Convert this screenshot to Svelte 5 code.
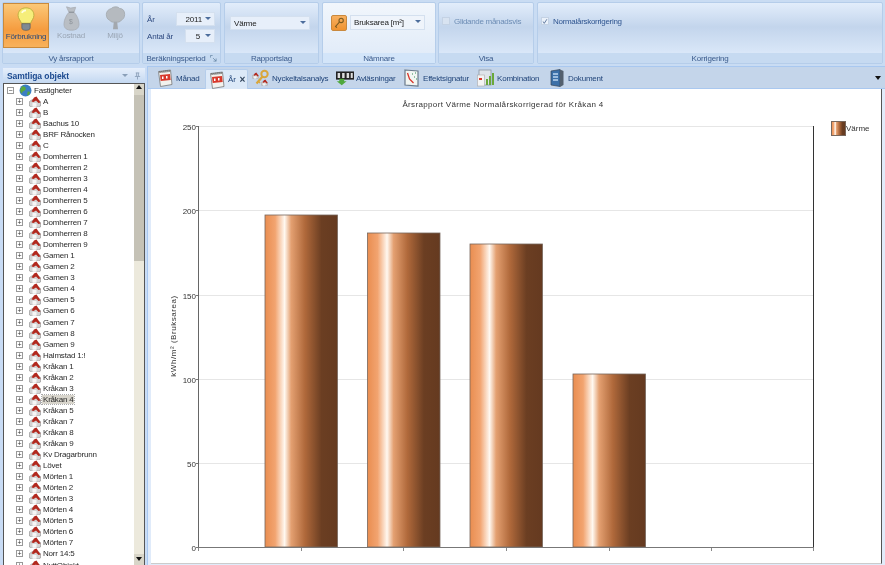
<script>
	const tabs = [
		{ label: 'Månad', icon: 'cal', w: 51 },
		{ label: 'År', icon: 'cal', active: true, w: 43 },
		{ label: 'Nyckeltalsanalys', icon: 'keys', w: 84 },
		{ label: 'Avläsningar', icon: 'counter', w: 67 },
		{ label: 'Effektsignatur', icon: 'sig', w: 74 },
		{ label: 'Kombination', icon: 'combo', w: 71 },
		{ label: 'Dokument', icon: 'doc', w: 60 }
	];

	const seq = (name, nums) => nums.map((n) => `${name} ${n}`);
	const objects = [
		'A',
		'B',
		'Bachus 10',
		'BRF Rånocken',
		'C',
		...seq('Domherren', [1, 2, 3, 4, 5, 6, 7, 8, 9]),
		...seq('Gamen', [1, 2, 3, 4, 5, 6, 7, 8, 9]),
		'Halmstad 1:!',
		...seq('Kråkan', [1, 2, 3, 4, 5, 7, 8, 9]),
		'Kv Dragarbrunn',
		'Lövet',
		...seq('Mörten', [1, 2, 3, 4, 5, 6, 7]),
		'Norr 14:5',
		'NuttObjekt'
	];

	const ticks = [
		{ label: '250', y: 126.5 },
		{ label: '200', y: 210.5 },
		{ label: '150', y: 295.5 },
		{ label: '100', y: 379.5 },
		{ label: '50', y: 463.5 },
		{ label: '0', y: 547.5 }
	];
	const bars = [
		{ x: 265, top: 215 },
		{ x: 367.5, top: 233 },
		{ x: 470, top: 244 },
		{ x: 573, top: 374 }
	];
	const xTicks = [198, 301, 403, 506, 609, 711, 813];
</script>

<svg class="defs" width="0" height="0" aria-hidden="true">
	<defs>
		<linearGradient id="copper" x1="0" x2="1" y1="0" y2="0">
			<stop offset="0" stop-color="#e98d50" />
			<stop offset="0.14" stop-color="#f2a470" />
			<stop offset="0.27" stop-color="#fff8f0" />
			<stop offset="0.36" stop-color="#e4a071" />
			<stop offset="0.55" stop-color="#b0693b" />
			<stop offset="0.78" stop-color="#6b3e22" />
			<stop offset="1" stop-color="#653a20" />
		</linearGradient>
		<symbol id="cal" viewBox="0 0 17 18">
			<path d="M2 2.500l12-1.500 1.500 14.500-11.500 2z" fill="#f2f2ee" stroke="#777" stroke-width=".8" />
			<path d="M3.500 6l10-1 .7 6-10 1z" fill="#d8392c" />
			<path d="M5.500 7.500h1.500v2.500h-1.500zM9.500 7h1.500v2.500h-1.500z" fill="#fff" />
			<path d="M3 3.200l10.500-1.200" stroke="#444" stroke-width="1.800" stroke-dasharray="1 1" />
		</symbol>
		<symbol id="house" viewBox="0 0 12 11">
			<path d="M.5 5.500l3-2h5l3 2v4.500l-2 .8h-7l-2-.8z" fill="#d4d4d4" stroke="#8c8c8c" stroke-width=".6" />
			<path d="M3.500 7h4v3.800h-4z" fill="#f6f6f6" />
			<path d="M2.500 5.500l2.500-4 2.500-1 4 6-2 .5-2.500-2.500-2.500 1.500z" fill="#b3281e" />
		</symbol>
		<symbol id="keys" viewBox="0 0 18 18">
			<circle cx="12.500" cy="5" r="3.200" fill="none" stroke="#d9a63a" stroke-width="2" />
			<path d="M10.500 7.500l-6 7" stroke="#d9a63a" stroke-width="2.200" />
			<path d="M6 12l2 2" stroke="#d9a63a" stroke-width="1.500" />
			<use href="#house" x="0" y="3" width="7" height="7" />
			<use href="#house" x="9" y="10" width="7" height="7" />
		</symbol>
		<symbol id="counter" viewBox="0 0 22 18">
			<rect x="0" y="1" width="22" height="10" fill="#222" />
			<path d="M2 3h3v6h-3zM7.500 3h3v6h-3zM13 3h3v6h-3zM18 3h2.500v6h-2.500z" fill="#ddd" />
			<path d="M4 10h6v3h3l-6 5-6-5h3z" fill="#4fa83d" />
		</symbol>
		<symbol id="sig" viewBox="0 0 16 18">
			<path d="M1 1l13 1v15l-13-1z" fill="#f2f6f2" stroke="#6a7a8a" stroke-width="1.200" />
			<path d="M3.500 4l2 6 4 4" fill="none" stroke="#d8342a" stroke-width="1.300" />
			<path d="M8 5h1M11 4h1M10 8h1M12 10h1" stroke="#2e8b57" stroke-width="1" />
		</symbol>
		<symbol id="combo" viewBox="0 0 18 18">
			<rect x="2" y="1" width="12" height="15" fill="#dfe4ea" stroke="#8a97a6" stroke-width=".8" />
			<rect x="0.500" y="6" width="7" height="11" fill="#f4f4f4" stroke="#aaa" stroke-width=".6" />
			<path d="M2 9h3v2h-3z" fill="#d8392c" />
			<path d="M9 16v-6h2v6zM12 16v-9h2v9zM15 16v-12h2v12z" fill="#6aa83c" />
		</symbol>
		<symbol id="doc" viewBox="0 0 14 18">
			<path d="M1 2l9-1.500v17l-9-1.500z" fill="#3a6fa8" stroke="#33465a" stroke-width=".7" />
			<path d="M10 .5l3.500 1.500v14l-3.500 2z" fill="#53606e" />
			<path d="M3 5h5M3 8h5M3 11h5" stroke="#bcd6f0" stroke-width="1.300" />
		</symbol>
	</defs>
</svg>

<div class="app">
	<header class="ribbon">
		<section class="group g1">
			<div class="body big-row">
				<div class="big active">
					<svg viewBox="0 0 24 30" width="20" height="25">
						<path d="M12 1c6 0 9.500 4 9.500 9 0 4-3 6-4 9.500h-11c-1-3.500-4-5.500-4-9.500 0-5 3.500-9 9.500-9z" fill="#f6ee7a" stroke="#b5a93a" />
						<path d="M7 7c1-2 3-3 5-3" stroke="#fffde0" stroke-width="2" fill="none" />
						<path d="M7 20h10v5c0 2-2 3-5 3s-5-1-5-3z" fill="#7f8a93" stroke="#4f5a64" stroke-width=".8" />
					</svg>
					<span>Förbrukning</span>
				</div>
				<div class="big off">
					<svg viewBox="0 0 20 30" width="17" height="25">
						<path d="M4 1l5 1.500 6-1-2 6c3 3 6 9 6 14 0 5-3 7.500-9 7.500s-9-2.500-9-7.500c0-5 3-11 6-14z" fill="#b9bec4" stroke="#a9afb6" />
						<path d="M7 7.500h6" stroke="#8d939a" stroke-width="1.500" />
						<text x="7" y="21" class="dollar">$</text>
					</svg>
					<span>Kostnad</span>
				</div>
				<div class="big off">
					<svg viewBox="0 0 24 30" width="21" height="25">
						<path d="M10 19h4l1 9h-6z" fill="#a3a8ae" />
						<path d="M12 1c3 0 4 1 5 2 4 0 6 3 6 7s-2 6-4 7c-1 2-4 3-7 2-3 1-6 0-7-2-3-1-4-4-4-7s2-6 6-7c1-1 3-2 5-2z" fill="#b5babf" stroke="#a4a9af" />
					</svg>
					<span>Miljö</span>
				</div>
			</div>
			<footer>Vy årsrapport</footer>
		</section>

		<section class="group g2">
			<div class="body period">
				<div class="field">
					<label for="year">År</label>
					<div class="combo num wide" id="year">2011<i></i></div>
				</div>
				<div class="field">
					<label for="count">Antal år</label>
					<div class="combo num" id="count">5<i></i></div>
				</div>
			</div>
			<footer>
				Beräkningsperiod
				<svg class="launcher" viewBox="0 0 8 8" width="7" height="7">
					<path d="M.5 3V.5H3M3.500 3.500L7 7M4 7h3V4" fill="none" stroke="#5f7f9f" stroke-width=".8" />
				</svg>
			</footer>
		</section>

		<section class="group g3">
			<div class="body">
				<div class="combo report">Värme<i></i></div>
			</div>
			<footer>Rapportslag</footer>
		</section>

		<section class="group g4">
			<div class="body denom">
				<span class="keybtn">
					<svg viewBox="0 0 14 14" width="12" height="12">
						<circle cx="9.500" cy="4" r="2.500" fill="none" stroke="#7a5a20" stroke-width="1.300" />
						<path d="M7.500 6L3 11l1.500 1.500" fill="none" stroke="#7a5a20" stroke-width="1.300" />
					</svg>
				</span>
				<div class="combo area">Bruksarea [m²]<i></i></div>
			</div>
			<footer>Nämnare</footer>
		</section>

		<section class="group g5">
			<div class="body check-row muted">
				<span class="box"></span>
				Glidande månadsvis
			</div>
			<footer>Visa</footer>
		</section>

		<section class="group g6">
			<div class="body check-row">
				<span class="box checked">
					<svg viewBox="0 0 8 8" width="7" height="7">
						<path d="M1.500 4l1.500 2.500 3.500-5.500" fill="none" stroke="#3c5a85" stroke-width="1" />
					</svg>
				</span>
				Normalårskorrigering
			</div>
			<footer>Korrigering</footer>
		</section>
	</header>

	<div class="main">
		<aside class="side">
			<div class="side-head">
				<strong>Samtliga objekt</strong>
				<span class="caret"></span>
				<svg viewBox="0 0 8 9" width="7" height="8">
					<path d="M2 1h4M3 1v4M5 1v4M1 5h6M4 5v3.500" fill="none" stroke="#8a9fb8" />
				</svg>
			</div>
			<div class="tree-box">
				<div class="tree">
					<div class="row root">
						<span class="exp">−</span>
						<svg class="globe" viewBox="0 0 12 12" width="13" height="13">
							<circle cx="6" cy="6" r="5.500" fill="#3b7fc4" />
							<path d="M3 2c2 0 4 1 3 3s-3 1-3 3-2-1-2-2 1-3 2-4zM8 7c1.500 0 2.500 0 2 1.500s-2 2.500-2.500 1.500z" fill="#5aa83c" />
						</svg>
						<span class="name">Fastigheter</span>
					</div>
					{#each objects as name}
						<div class="row">
							<span class="exp">+</span>
							<svg class="house" width="12" height="11"><use href="#house" width="12" height="11" /></svg>
							<span class="name" class:picked={name === 'Kråkan 4'}>{name}</span>
						</div>
					{/each}
				</div>
				<div class="scroll">
					<span class="arrow up"></span>
					<span class="thumb"></span>
					<span class="arrow down"></span>
				</div>
			</div>
		</aside>

		<div class="content">
			<nav class="tabs">
				{#each tabs as tab}
					<div class="tab" class:current={tab.active} style="width: {tab.w}px">
						<svg width="18" height="18"><use href="#{tab.icon}" width="18" height="18" /></svg>
						<span>{tab.label}</span>
						{#if tab.active}<b>×</b>{/if}
					</div>
				{/each}
				<span class="more"></span>
			</nav>

			<div class="panel">
				<svg class="chart" width="885" height="565" viewBox="0 0 885 565">
					<text class="title" x="503" y="107" text-anchor="middle">Årsrapport Värme Normalårskorrigerad för Kråkan 4</text>
					{#each ticks as t}
						<line x1="198" x2="813" y1={t.y} y2={t.y} stroke="#e6e6e6" />
						<line x1="196" x2="198" y1={t.y} y2={t.y} stroke="#777" />
						<text x="196" y={t.y + 3} text-anchor="end">{t.label}</text>
					{/each}
					{#each bars as b}
						<rect x={b.x} y={b.top} width="72.500" height={547 - b.top} fill="url(#copper)" stroke="#77675c" stroke-width="0.800" />
					{/each}
					<line x1="198.500" x2="198.500" y1="126" y2="548" stroke="#666" />
					<line x1="813.500" x2="813.500" y1="126" y2="548" stroke="#333" />
					<line x1="198" x2="814" y1="547.500" y2="547.500" stroke="#777" />
					{#each xTicks as x}
						<line x1={x + 0.5} x2={x + 0.5} y1="548" y2="551" stroke="#888" />
					{/each}
					<text class="axis" transform="translate(176 336) rotate(-90)" text-anchor="middle">kWh/m² (Bruksarea)</text>
					<rect x="831.500" y="121.500" width="14" height="14" fill="url(#copper)" stroke="#77675c" />
					<text x="846" y="131">Värme</text>
				</svg>
			</div>
		</div>
	</div>
</div>

<style>
	:global(body) {
		margin: 0;
		background: #fff;
	}

	.defs {
		position: absolute;
	}

	.app {
		width: 885px;
		height: 565px;
		overflow: hidden;
		display: flex;
		flex-direction: column;
		font-family: 'Liberation Sans', Arial, sans-serif;
		font-size: 8px;
		letter-spacing: -0.2px;
		color: #222;
		background: #bfd3ea;
		filter: blur(0.35px);
	}

	/* ribbon */
	.ribbon {
		height: 66px;
		flex: none;
		box-sizing: border-box;
		display: flex;
		gap: 2px;
		padding: 2px;
		background: #c9dcf3;
	}

	.group {
		display: flex;
		flex-direction: column;
		box-sizing: border-box;
		border: 1px solid #b5cdea;
		border-radius: 2px;
		background: linear-gradient(#e2edfb 0, #c3d5ec 40%, #e2eefd 100%);
	}

	.group footer {
		height: 10px;
		flex: none;
		display: flex;
		align-items: center;
		justify-content: center;
		gap: 4px;
		background: #c6daf1;
		color: #3b5b8c;
	}

	.body {
		flex: 1;
		min-height: 0;
	}

	.g1 { width: 138px; }
	.g2 { width: 79px; margin-right: 1px; }
	.g3 { width: 95px; margin-right: 1px; }
	.g4 { width: 114px; }
	.g5 { width: 96px; margin-right: 1px; }
	.g6 { flex: 1; }

	.g4 {
		background: linear-gradient(#f1f6fc, #dfeaf8);
	}

	.g4 footer {
		background: #d3e5f9;
	}

	.big-row {
		display: flex;
	}

	.big {
		width: 44px;
		height: 45px;
		box-sizing: border-box;
		display: flex;
		flex-direction: column;
		align-items: center;
		padding-top: 3px;
		color: #9aa6b5;
	}

	.big svg {
		flex: none;
	}

	.big.active {
		width: 46px;
		padding-top: 3px;
		border: 1px solid #c98a3c;
		background: linear-gradient(#fbc878, #f59c3f 60%, #f8b25c);
		color: #2e4a78;
	}

	.dollar {
		font-size: 8px;
		fill: #8d939a;
	}

	.period {
		display: flex;
		flex-direction: column;
		gap: 3px;
		padding: 9px 5px 0 4px;
	}

	.field {
		display: flex;
		align-items: center;
		justify-content: space-between;
		color: #2e4a80;
	}

	.combo {
		position: relative;
		box-sizing: border-box;
		display: flex;
		align-items: center;
		height: 14px;
		background: #e7effa;
		border: 1px solid #d4e0ef;
		color: #222;
		padding-left: 3px;
	}

	.combo i {
		position: absolute;
		right: 3px;
		top: 4px;
		border: 3px solid transparent;
		border-top: 3px solid #4c6d9c;
		border-bottom: 0;
	}

	.combo.num {
		width: 30px;
		justify-content: flex-end;
		padding-right: 14px;
		padding-left: 0;
	}

	.combo.num.wide {
		width: 39px;
		padding-right: 12px;
	}

	.report {
		width: 80px;
		margin: 13px 0 0 5px;
	}

	.denom {
		display: flex;
		align-items: flex-start;
		gap: 3px;
		padding: 12px 0 0 8px;
	}

	.keybtn {
		width: 16px;
		height: 16px;
		display: flex;
		align-items: center;
		justify-content: center;
		box-sizing: border-box;
		background: linear-gradient(#f8b060, #ef9330);
		border: 1px solid #c9893e;
		border-radius: 2px;
	}

	.area {
		width: 75px;
		height: 15px;
		background: #eff4fb;
	}

	.check-row {
		display: flex;
		align-items: flex-start;
		gap: 4px;
		padding: 14px 0 0 3px;
		color: #2f5590;
		line-height: 9px;
		letter-spacing: -0.3px;
	}

	.muted {
		color: #6d8db5;
	}

	.box {
		width: 8px;
		height: 8px;
		flex: none;
		box-sizing: border-box;
		display: flex;
		align-items: center;
		justify-content: center;
		background: #d8e3f1;
		border: 1px solid #c4d2e4;
	}

	.box.checked {
		background: #eaf1fa;
	}

	/* main area */
	.main {
		flex: 1;
		min-height: 0;
		display: flex;
	}

	.side {
		width: 148px;
		flex: none;
		box-sizing: border-box;
		display: flex;
		flex-direction: column;
		padding: 2px 2px 0 3px;
		background: #c9dcf5;
		border-right: 1px solid #a9c8f0;
	}

	.side-head {
		height: 15px;
		flex: none;
		display: flex;
		align-items: center;
		gap: 6px;
		padding: 0 4px;
		background: linear-gradient(#e6effb, #c4d8f1);
		color: #1c4a90;
	}

	.side-head strong {
		flex: 1;
		font-size: 8.5px;
		letter-spacing: -0.05px;
	}

	.caret {
		border: 3px solid transparent;
		border-top: 3px solid #8a9fb8;
		border-bottom: 0;
	}

	.tree-box {
		flex: 1;
		min-height: 0;
		display: flex;
		background: #fff;
		border: 1px solid #555;
		border-bottom: 0;
	}

	.tree {
		flex: 1;
		min-width: 0;
		overflow: hidden;
		padding-top: 0.5px;
	}

	.row {
		height: 11.05px;
		display: flex;
		align-items: center;
		padding-left: 12px;
		white-space: nowrap;
	}

	.row.root {
		padding-left: 3px;
	}

	.exp {
		width: 7px;
		height: 7px;
		flex: none;
		box-sizing: border-box;
		border: 1px solid #999;
		font-size: 7px;
		line-height: 5px;
		letter-spacing: 0;
		text-align: center;
		margin-right: 6px;
		color: #333;
	}

	.root .exp {
		margin-right: 5px;
	}

	.house,
	.globe {
		flex: none;
		margin-right: 1px;
	}

	.name {
		padding: 0 1px;
		color: #2a2a2a;
	}

	.picked {
		background: #d8d5cc;
		outline: 1px dotted #aaa;
		outline-offset: 0;
	}

	.scroll {
		width: 10px;
		flex: none;
		display: flex;
		flex-direction: column;
		background: #ece9dc;
	}

	.arrow {
		height: 11px;
		flex: none;
		box-sizing: border-box;
		background: #d8d5c8;
		position: relative;
	}

	.arrow::after {
		content: '';
		position: absolute;
		left: 2px;
		border: 3px solid transparent;
	}

	.up::after {
		top: 1px;
		border-bottom: 4px solid #111;
		border-top: 0;
	}

	.down {
		margin-top: auto;
	}

	.down::after {
		top: 3px;
		border-top: 4px solid #111;
		border-bottom: 0;
	}

	.thumb {
		height: 166px;
		flex: none;
		background: #c5c2b6;
	}

	.content {
		flex: 1;
		min-width: 0;
		display: flex;
		flex-direction: column;
		background: #e0ebfa;
	}

	.tabs {
		height: 23px;
		flex: none;
		box-sizing: border-box;
		display: flex;
		align-items: flex-end;
		padding-left: 6px;
		background: #c4d5ea;
		border-top: 1px solid #a9c8f0;
		border-bottom: 1px solid #a9c8f0;
		position: relative;
	}

	.tab {
		height: 20px;
		box-sizing: border-box;
		flex: none;
		display: flex;
		align-items: center;
		gap: 2px;
		padding-left: 2px;
		color: #1f4378;
		white-space: nowrap;
	}

	.tab.current {
		margin-right: 2px;
		margin-bottom: -1px;
		background: #dce9f8;
		border: 1px solid #b5cdea;
		border-bottom: 0;
		border-radius: 2px 2px 0 0;
	}

	.tab b {
		font-size: 10px;
		line-height: 8px;
		font-weight: bold;
		color: #33475f;
		margin-left: 2px;
	}

	.more {
		position: absolute;
		right: 4px;
		top: 9px;
		border: 3px solid transparent;
		border-top: 4px solid #111;
		border-bottom: 0;
	}

	.panel {
		flex: 1;
		min-height: 0;
		position: relative;
		overflow: hidden;
		margin: 0 3px 1px 3px;
		background: #fff;
		border-right: 1px solid #555;
		border-bottom: 1px solid #ccc;
	}

	/* chart is drawn in page coordinates, shifted back to the panel origin */
	.chart {
		position: absolute;
		left: -151px;
		top: -89px;
	}

	.chart text {
		font-family: 'Liberation Sans', Arial, sans-serif;
		font-size: 8px;
		letter-spacing: 0;
		fill: #333;
	}

	.chart .title {
		letter-spacing: 0.35px;
	}

	.chart .axis {
		letter-spacing: 0.55px;
	}
</style>
